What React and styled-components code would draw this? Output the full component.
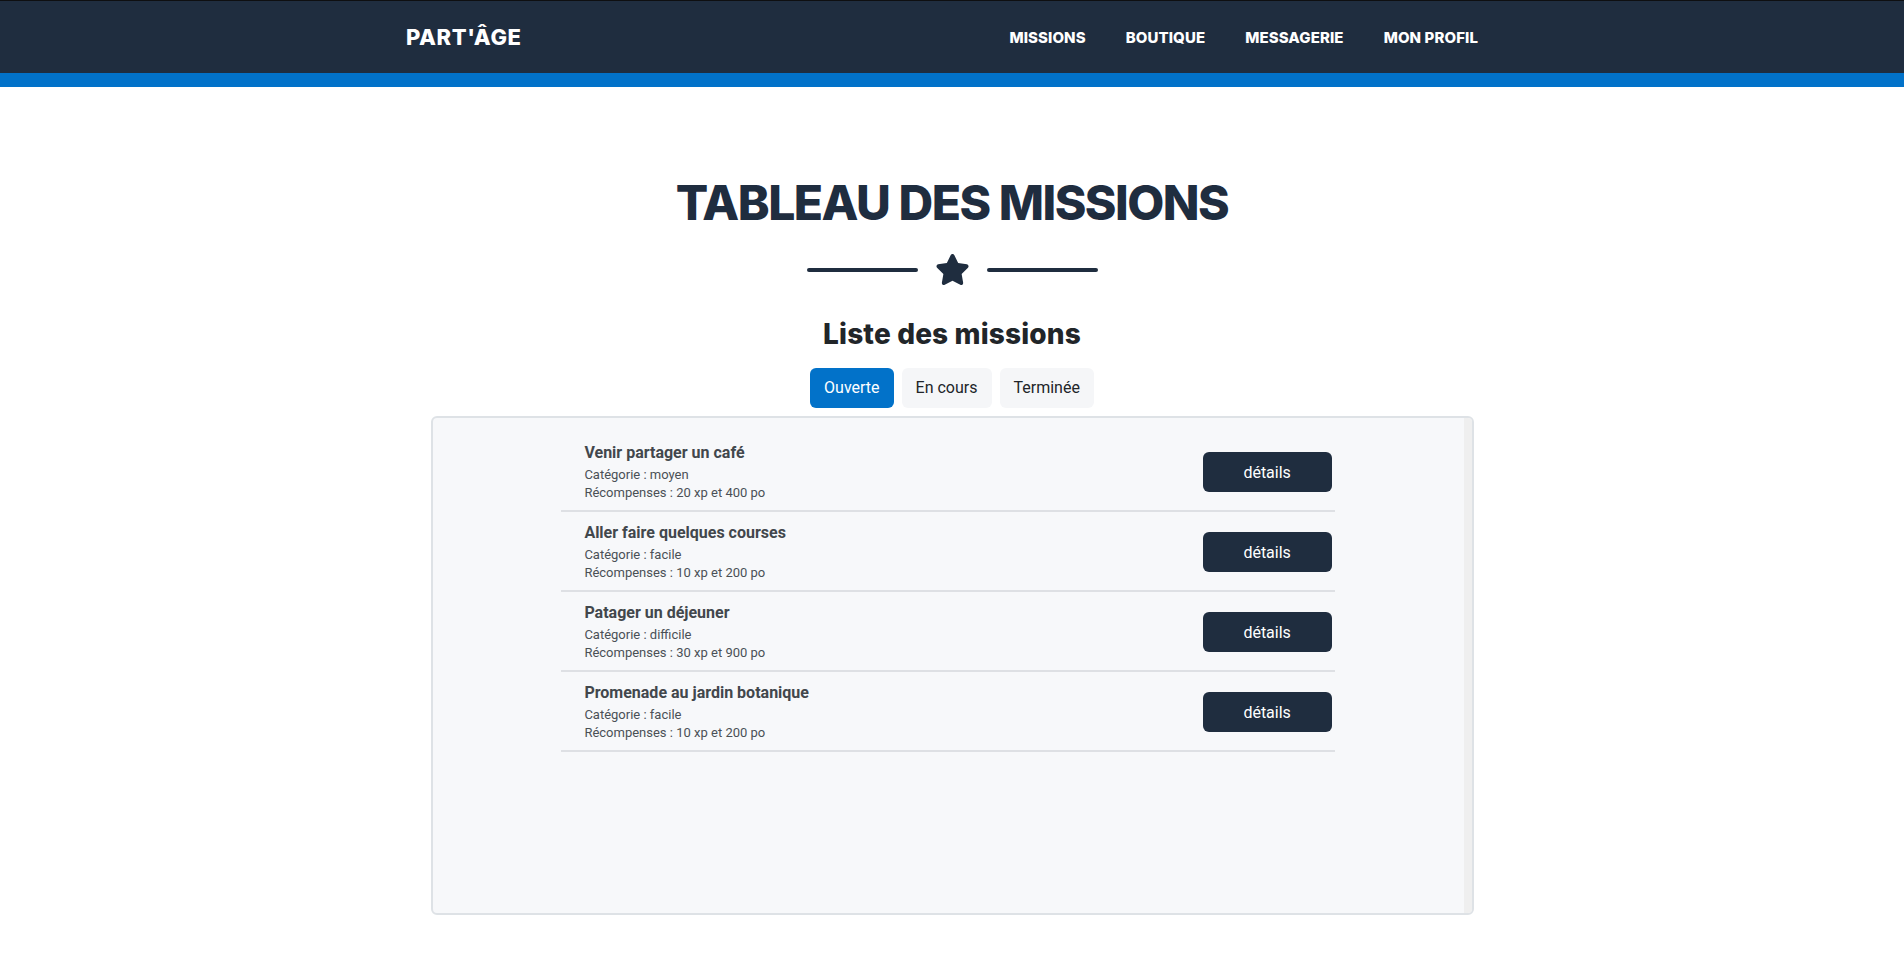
import React, { useState } from 'react'
import styled, { createGlobalStyle } from 'styled-components'
import { FaStar } from 'react-icons/fa6'

const missions = [
    { id: 1, title: 'Venir partager un café', category: 'moyen', xp: 20, po: 400 },
    { id: 2, title: 'Aller faire quelques courses', category: 'facile', xp: 10, po: 200 },
    { id: 3, title: 'Patager un déjeuner', category: 'difficile', xp: 30, po: 900 },
    { id: 4, title: 'Promenade au jardin botanique', category: 'facile', xp: 10, po: 200 },
]

const tabs = ['Ouverte', 'En cours', 'Terminée']

const App = () => {
    const [tab, setTab] = useState('Ouverte')
    return (
        <>
            <GlobalStyle />
            <Header>
                <HeaderInner>
                    <Logo>PART'ÂGE</Logo>
                    <Nav>
                        <NavLink href="#">Missions</NavLink>
                        <NavLink href="#">Boutique</NavLink>
                        <NavLink href="#">Messagerie</NavLink>
                        <NavLink href="#">Mon profil</NavLink>
                    </Nav>
                </HeaderInner>
            </Header>
            <BlueBar />
            <Main>
                <Title>TABLEAU DES MISSIONS</Title>
                <Divider>
                    <DividerLine />
                    <FaStar size={35} />
                    <DividerLine />
                </Divider>
                <SubTitle>Liste des missions</SubTitle>
                <Tabs>
                    {tabs.map((t) => (
                        <Tab key={t} $active={tab === t} onClick={() => setTab(t)}>
                            {t}
                        </Tab>
                    ))}
                </Tabs>
                <Board>
                    <Scroller>
                        <List>
                            {missions.map((m) => (
                                <Row key={m.id}>
                                    <div>
                                        <MissionTitle>{m.title}</MissionTitle>
                                        <Info>Catégorie : {m.category}</Info>
                                        <Info>Récompenses : {m.xp} xp et {m.po} po</Info>
                                    </div>
                                    <DetailsButton type="button">détails</DetailsButton>
                                </Row>
                            ))}
                        </List>
                    </Scroller>
                    <Track />
                </Board>
            </Main>
        </>
    )
}

export default App

const GlobalStyle = createGlobalStyle`
    body{
        margin: 0;
        background: #fff;
        font-family: Roboto, "Liberation Sans", sans-serif;
        color: #212529;
    }
    *{
        box-sizing: border-box;
    }
`

const Header = styled.header`
    height: 73px;
    background: #1f2d3f;
    border-top: 1px solid #0e0f11;
`

const HeaderInner = styled.div`
    width: 1140px;
    height: 100%;
    margin: 0 auto;
    padding: 0 24px;
    display: flex;
    align-items: center;
    justify-content: space-between;
`

const Logo = styled.div`
    font-family: Inter, "DejaVu Sans", sans-serif;
    font-weight: 800;
    font-size: 22px;
    color: #fff;
    letter-spacing: 0.6px;
    margin-top: -1px;
`

const Nav = styled.nav`
    display: flex;
    align-items: center;
`

const NavLink = styled.a`
    font-family: Inter, "DejaVu Sans", sans-serif;
    font-weight: 800;
    font-size: 15px;
    letter-spacing: 0.1px;
    text-transform: uppercase;
    color: #fff;
    text-decoration: none;
    padding: 0 20px;
    margin-top: 1px;
`

const BlueBar = styled.div`
    height: 14px;
    background: #0272c9;
`

const Main = styled.main`
    padding-top: 87px;
    display: flex;
    flex-direction: column;
    align-items: center;
`

const Title = styled.h1`
    margin: 0;
    font-family: Inter, "DejaVu Sans", sans-serif;
    font-weight: 800;
    font-size: 48px;
    line-height: 58px;
    letter-spacing: -1.5px;
    color: #1f2d3f;
`

const Divider = styled.div`
    margin-top: 20px;
    height: 35px;
    display: flex;
    align-items: center;
    gap: 17px;
    color: #1f2d3f;
`

const DividerLine = styled.div`
    width: 111px;
    height: 4px;
    border-radius: 2px;
    background: #1f2d3f;
`

const SubTitle = styled.h2`
    margin: 30px 0 0;
    font-family: Inter, "DejaVu Sans", sans-serif;
    font-weight: 800;
    font-size: 28px;
    line-height: 34px;
    letter-spacing: 0.15px;
    color: #212529;
`

const Tabs = styled.div`
    margin-top: 17px;
    display: flex;
    gap: 8px;
`

const Tab = styled.button`
    border: none;
    border-radius: 6px;
    padding: 8px 14px;
    font-family: Roboto, sans-serif;
    font-size: 16px;
    line-height: 24px;
    cursor: pointer;
    background: ${(p) => (p.$active ? '#0272c9' : '#f5f6f8')};
    color: ${(p) => (p.$active ? '#fff' : '#212529')};
`

const Board = styled.section`
    margin-top: 8px;
    width: 1043px;
    height: 499px;
    display: flex;
    background: #f7f8fa;
    border: 2px solid #dee2e6;
    border-radius: 6px;
    overflow: hidden;
`

const Scroller = styled.div`
    flex: 1;
    padding-top: 14px;
    overflow-y: auto;
`

const Track = styled.div`
    width: 8px;
    flex-shrink: 0;
    background: #efefef;
`

const List = styled.ul`
    list-style: none;
    margin: 0 auto;
    padding: 0;
    width: 75%;
`

const Row = styled.li`
    display: flex;
    align-items: center;
    justify-content: space-between;
    padding: 10px 3px 8px 23px;
    border-bottom: 2px solid #dee0e4;
`

const MissionTitle = styled.div`
    font-size: 16px;
    font-weight: 700;
    line-height: 22px;
    color: #42474c;
    margin-bottom: 2px;
`

const Info = styled.div`
    font-size: 13px;
    line-height: 18px;
    color: #4a5056;
`

const DetailsButton = styled.button`
    width: 129px;
    height: 40px;
    border: none;
    border-radius: 6px;
    background: #1f2d3f;
    color: #fff;
    font-family: Roboto, sans-serif;
    font-size: 16px;
    cursor: pointer;
`
